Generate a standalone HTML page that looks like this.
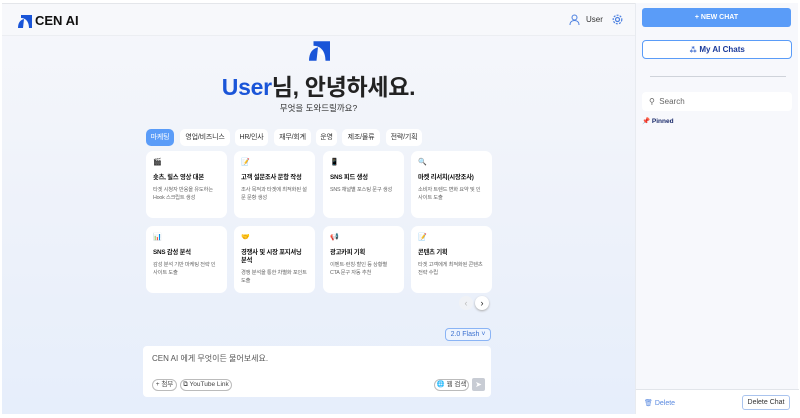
<!DOCTYPE html><html><head><meta charset="utf-8"><style>
*{box-sizing:border-box;margin:0;padding:0}
body{width:800px;height:418px;background:#fff;font-family:"Liberation Sans","Noto Sans CJK KR",sans-serif;position:relative;overflow:hidden;color:#222}
.main{position:absolute;left:2px;top:3px;width:633px;height:411px;background:linear-gradient(180deg,#f6f7fb 0%,#eef2fa 50%,#e6eefb 100%);border-top:1px solid #e4e6ea}
.hdr{position:absolute;left:0;top:0;width:633px;height:32px;border-bottom:1px solid #eceef2;background:#f7f8fb}
.side{position:absolute;left:635px;top:3px;width:163px;height:411px;background:#f7f8fc;border-left:1px solid #e8ebf0}
.abs{position:absolute}
.tab{position:absolute;top:125px;height:17px;border-radius:5px;background:#fff;font-size:7px;line-height:17px;text-align:center;color:#333;letter-spacing:-0.2px}
.card{position:absolute;width:81px;height:67px;background:#fff;border-radius:7px;padding:8px 7px;font-size:5.3px;color:#666;line-height:8px;letter-spacing:-0.2px}
.card .ic{font-size:7px;height:10px}
.card b{display:block;font-size:6.3px;color:#111;margin:5px 0 4px;line-height:8px;white-space:nowrap}
</style></head><body>
<div class="main">
<div class="hdr">
<svg class="abs" style="left:16px;top:11px" width="14" height="13" viewBox="0 0 14 13"><path d="M3 0h11v13H11C11 7 8 3 3 3z" fill="#1a55d8"/><path d="M0 13C0 8 2 5 6 4L5 13z" fill="#1a55d8"/><path d="M9 6l1 4-4-2z" fill="#fff"/></svg>
<div class="abs" style="left:33px;top:9px;font-size:13px;font-weight:bold;color:#111">CEN AI</div>
<svg class="abs" style="left:567px;top:10px" width="11" height="11" viewBox="0 0 11 11" fill="none" stroke="#4a7fe0"><circle cx="5.5" cy="3.5" r="2.5"/><path d="M1 11c0-3 2-4.5 4.5-4.5S10 8 10 11"/></svg>
<div class="abs" style="left:584px;top:11px;font-size:8px;color:#333">User</div>
<svg class="abs" style="left:610px;top:10px" width="11" height="11" viewBox="0 0 11 11" fill="none" stroke="#4a7fe0" stroke-width="1.2"><circle cx="5.5" cy="5.5" r="2"/><circle cx="5.5" cy="5.5" r="4.3" stroke-dasharray="2 1.2"/></svg>
</div>
<svg class="abs" style="left:307px;top:37px" width="21" height="20" viewBox="0 0 14 13"><path d="M3 0h11v13H11C11 7 8 3 3 3z" fill="#1a55d8"/><path d="M0 13C0 8 2 5 6 4L5 13z" fill="#1a55d8"/><path d="M9 6l1 4-4-2z" fill="#fff"/></svg>
<div class="abs" style="left:0;width:633px;top:64px;text-align:center;font-size:23px;font-weight:bold;color:#222;letter-spacing:-0.3px"><span style="color:#1a55d8">User</span>님, 안녕하세요.</div>
<div class="abs" style="left:0;width:633px;top:98px;text-align:center;font-size:8.5px;color:#333">무엇을 도와드릴까요?</div>
<div class="tab" style="left:144px;width:28px;background:#5a9cf8;color:#fff">마케팅</div>
<div class="tab" style="left:178px;width:50px">영업/비즈니스</div>
<div class="tab" style="left:233px;width:33px">HR/인사</div>
<div class="tab" style="left:272px;width:37px">재무/회계</div>
<div class="tab" style="left:314px;width:21px">운영</div>
<div class="tab" style="left:340px;width:38px">제조/물류</div>
<div class="tab" style="left:384px;width:36px">전략/기획</div>
<div class="card" style="left:144px;top:147px"><div class="ic">🎬</div><b>숏츠, 릴스 영상 대본</b>타겟 시청자 반응을 유도하는 Hook 스크립트 생성</div>
<div class="card" style="left:232px;top:147px"><div class="ic">📝</div><b>고객 설문조사 문항 작성</b>조사 목적과 타겟에 최적화된 설문 문항 생성</div>
<div class="card" style="left:321px;top:147px"><div class="ic">📱</div><b>SNS 피드 생성</b>SNS 채널별 포스팅 문구 생성</div>
<div class="card" style="left:409px;top:147px"><div class="ic">🔍</div><b>마켓 리서치(시장조사)</b>소비자 트렌드 변화 요약 및 인사이트 도출</div>
<div class="card" style="left:144px;top:222px"><div class="ic">📊</div><b>SNS 감성 분석</b>감성 분석 기반 마케팅 전략 인사이트 도출</div>
<div class="card" style="left:232px;top:222px"><div class="ic">🤝</div><b style="white-space:normal">경쟁사 및 시장 포지셔닝 분석</b>경쟁 분석을 통한 차별화 포인트 도출</div>
<div class="card" style="left:321px;top:222px"><div class="ic">📢</div><b>광고카피 기획</b>이벤트·런칭·할인 등 상황별 CTA 문구 자동 추천</div>
<div class="card" style="left:409px;top:222px"><div class="ic">📝</div><b>콘텐츠 기획</b>타겟 고객에게 최적화된 콘텐츠 전략 수립</div>
<div class="abs" style="left:457px;top:292px;width:14px;height:14px;border-radius:50%;background:#f0f2f6;color:#bbb;font-size:9px;text-align:center;line-height:14px">‹</div>
<div class="abs" style="left:473px;top:292px;width:14px;height:14px;border-radius:50%;background:#fff;box-shadow:0 1px 2px #aaa;font-size:9px;text-align:center;line-height:14px">›</div>
<div class="abs" style="left:443px;top:324px;width:46px;height:13px;border:1px solid #8ab4f5;border-radius:4px;background:#eef4fe;font-size:7px;color:#3a70d0;text-align:center;line-height:11px">2.0 Flash ˅</div>
<div class="abs" style="left:141px;top:342px;width:348px;height:51px;background:#fff;border-radius:4px">
<div class="abs" style="left:9px;top:7px;font-size:8px;color:#555">CEN AI 에게 무엇이든 물어보세요.</div>
<div class="abs" style="left:9px;top:33px;width:25px;height:12px;border:1px solid #bbb;border-radius:7px;font-size:6.5px;line-height:10px;text-align:center;color:#444">+ 첨부</div>
<div class="abs" style="left:37px;top:33px;width:52px;height:12px;border:1px solid #bbb;border-radius:7px;font-size:6.5px;line-height:10px;text-align:center;color:#444">⧉ YouTube Link</div>
<div class="abs" style="left:291px;top:33px;width:35px;height:12px;border:1px solid #bbb;border-radius:7px;font-size:6.5px;line-height:10px;text-align:center;color:#444">🌐 웹 검색</div>
<div class="abs" style="left:329px;top:32px;width:13px;height:13px;border-radius:2px;background:#c8ccd4;color:#fff;font-size:8px;text-align:center;line-height:13px">➤</div>
</div>
</div>
<div class="side">
<div class="abs" style="left:6px;top:5px;width:149px;height:19px;background:#5a9cf8;border-radius:3px;color:#fff;font-size:7px;font-weight:bold;text-align:center;line-height:19px">+ NEW CHAT</div>
<div class="abs" style="left:6px;top:37px;width:150px;height:19px;border:1px solid #5a9cf8;border-radius:4px;background:#fff;color:#1a3a9a;font-size:8px;font-weight:bold;text-align:center;line-height:17px"><span style="color:#1a4fc4">⁂</span> My AI Chats</div>
<div class="abs" style="left:14px;top:73px;width:136px;height:1px;background:#cfd3da"></div>
<div class="abs" style="left:6px;top:89px;width:150px;height:19px;background:#fff;border-radius:4px;font-size:8px;color:#666;line-height:19px;padding-left:7px">⚲ &nbsp;Search</div>
<div class="abs" style="left:6px;top:114px;font-size:6.5px;font-weight:bold;color:#1a2a6a">📌 Pinned</div>
<div class="abs" style="left:0;top:386px;width:163px;height:25px;border-top:1px solid #e2e5ea;background:#fff"></div>
<div class="abs" style="left:8px;top:396px;font-size:7px;color:#5a8ae0">🗑 Delete</div>
<div class="abs" style="left:106px;top:392px;width:48px;height:15px;border:1px solid #aac4ee;border-radius:3px;font-size:7px;color:#333;text-align:center;line-height:13px">Delete Chat</div>
</div>
</body></html>
